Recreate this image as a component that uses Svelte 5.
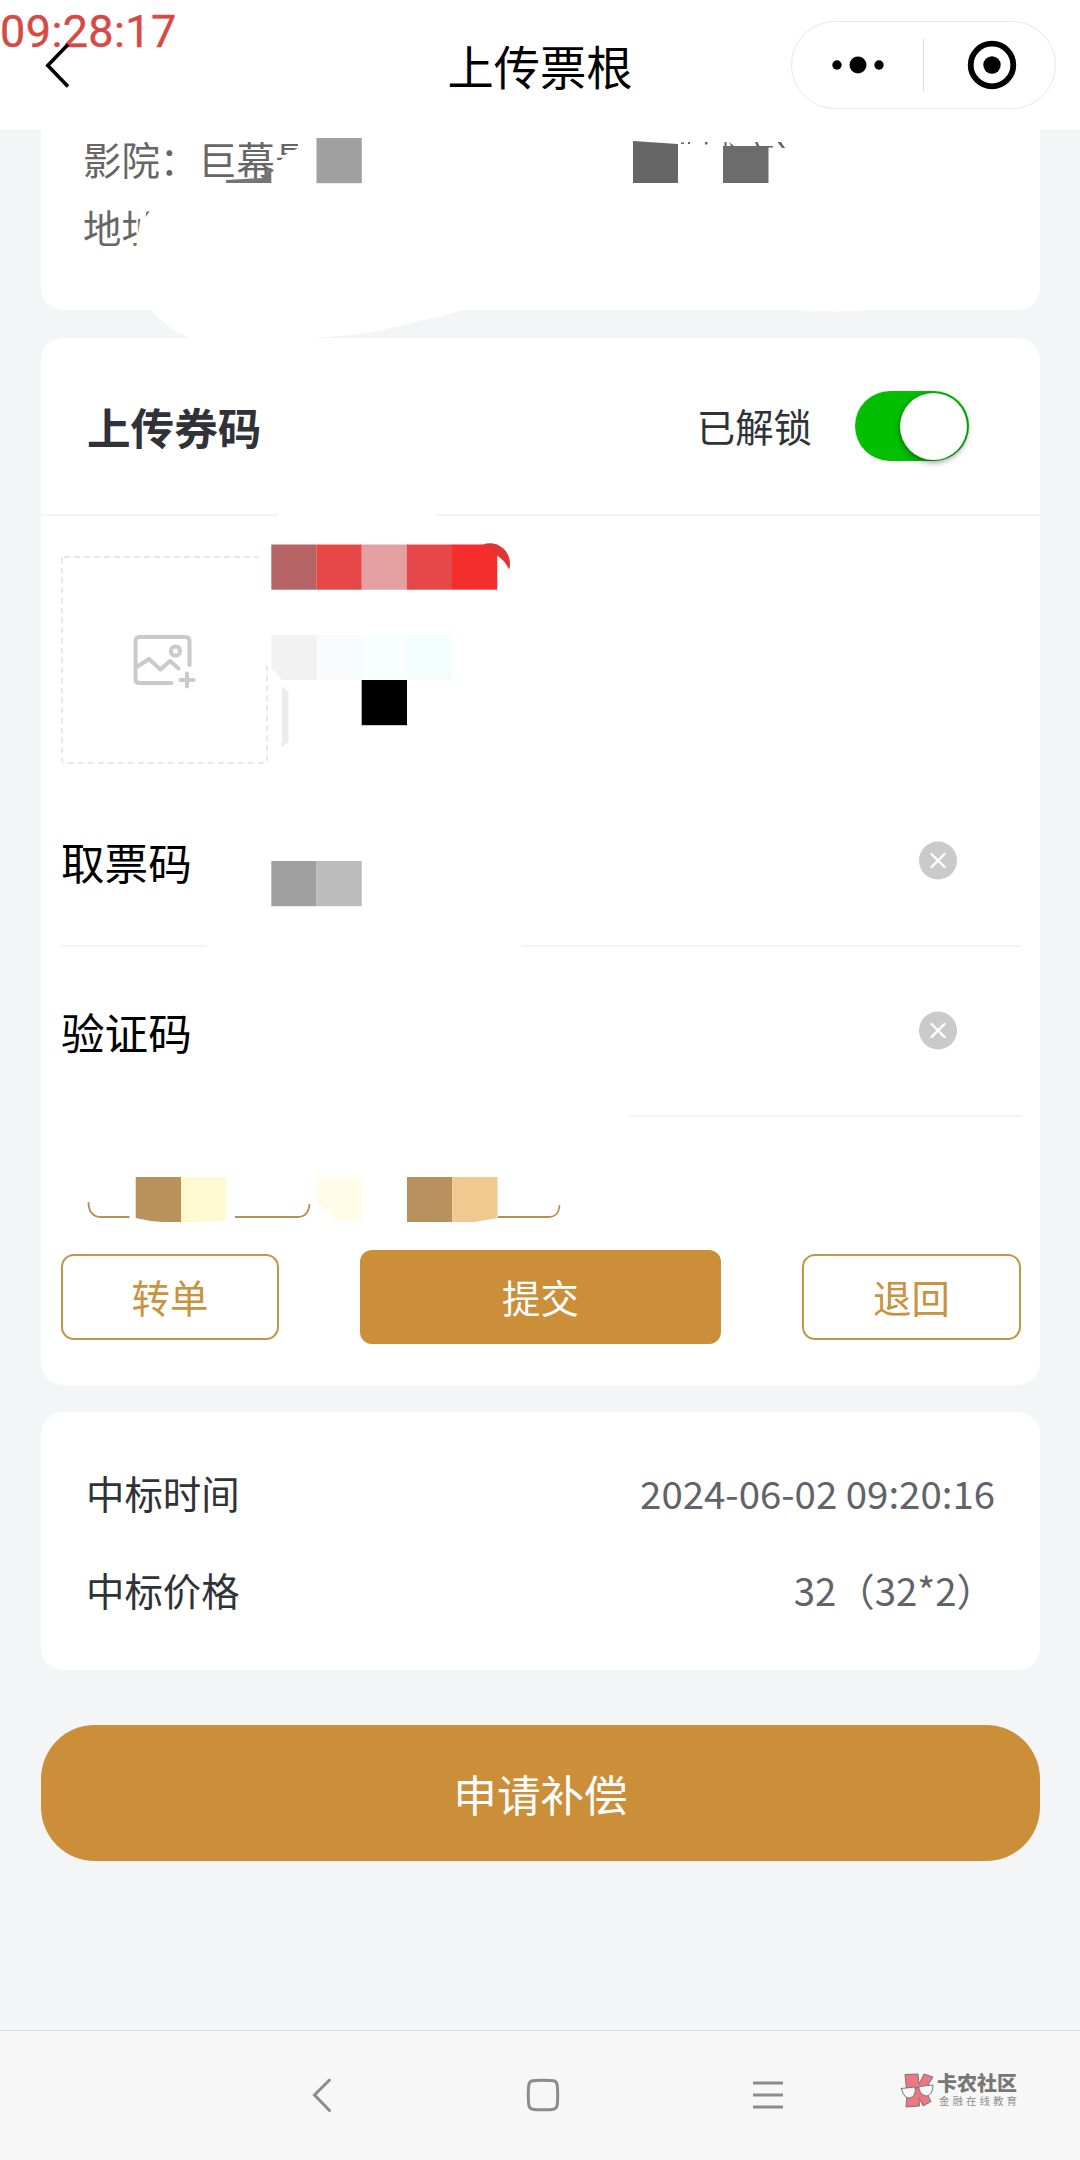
<script>
    let unlocked = true;

    const fields = [
        { label: "取票码", value: "" },
        { label: "验证码", value: "" },
    ];

    const bid = [
        { label: "中标时间", value: "2024-06-02 09:20:16" },
        { label: "中标价格", value: "32（32*2）" },
    ];

    // mosaic tiles left over the private data
    const tiles = [
        { x: 316.5, y: 138, color: "#a0a0a0" },
        { x: 271.3, y: 544.5, color: "#b66365" },
        { x: 316.5, y: 544.5, color: "#e64747" },
        { x: 361.7, y: 544.5, color: "#e4a0a0" },
        { x: 406.9, y: 544.5, color: "#e64748" },
        { x: 452, y: 544.5, color: "#f42d2d" },
        { x: 316.5, y: 635, color: "#f8fcff" },
        { x: 361.7, y: 635, color: "#f8ffff" },
        { x: 406.9, y: 635, color: "#f5feff" },
        { x: 361.7, y: 680, color: "#000" },
        { x: 271.3, y: 861, color: "#a0a0a0" },
        { x: 316.5, y: 861, color: "#bcbcbc" },
    ];
</script>

<div class="page">
    <header>
        <span class="timer">09:28:17</span>
        <svg class="back" width="26" height="48" viewBox="0 0 26 48">
            <path d="M23 3.5 2.8 24.5 23 45.5" />
        </svg>
        <h1>上传票根</h1>
        <div class="capsule">
            <svg width="52" height="20" viewBox="0 0 52 20">
                <circle cx="5" cy="10" r="4.7" />
                <circle cx="26" cy="10" r="8.5" />
                <circle cx="47" cy="10" r="4.7" />
            </svg>
            <i></i>
            <svg width="50" height="50" viewBox="0 0 50 50">
                <circle class="ring" cx="25" cy="25" r="21.3" />
                <circle cx="25" cy="25" r="8.7" />
            </svg>
        </div>
    </header>

    <section class="card cinema">
        <p>影院：巨幕景</p>
        <p>地址</p>
    </section>

    <section class="card upload">
        <div class="head">
            <h2>上传券码</h2>
            <span>已解锁</span>
            <button
                class="switch"
                class:on={unlocked}
                aria-label="已解锁"
                on:click={() => (unlocked = !unlocked)}
            ></button>
        </div>

        <svg class="picker" width="208" height="208" viewBox="0 0 208 208">
            <rect x="1" y="1" width="205" height="206" rx="2" />
            <g>
                <path
                    d="M128.5 109V85q0-4-4-4h-46q-4 0-4 4v38q0 4 4 4h32M75 111.5l13-8.5 11.5 10.5 9.5-8.5 8.5 7.5M126 117.5v13M119.5 124h13"
                />
                <circle cx="114.5" cy="95" r="4.6" />
            </g>
        </svg>

        {#each fields as f}
            <div class="field">
                <span>{f.label}</span>
                <svg width="38" height="39" viewBox="0 0 38 38">
                    <circle cx="19" cy="19" r="19" />
                    <path d="M12.5 12.5l13 13M25.5 12.5l-13 13" />
                </svg>
            </div>
        {/each}

        <div class="actions">
            <button class="outline">转单</button>
            <button class="submit">提交</button>
            <button class="outline">退回</button>
        </div>
    </section>

    <section class="card bid">
        {#each bid as b}
            <div class="row">
                <span>{b.label}</span>
                <span class="value">{b.value}</span>
            </div>
        {/each}
    </section>

    <button class="claim">申请补偿</button>

    <nav>
        <svg class="key" width="48" height="48" viewBox="0 0 48 48">
            <path d="M31.500 9 16.500 24l15 15.500" />
        </svg>
        <svg class="key home" width="48" height="48" viewBox="0 0 48 48">
            <path
                d="M24 9.200q7.500 0 10.500.6 3 .6 3.600 3.700.6 3.500.6 10.500t-.6 10.500q-.6 3.100-3.600 3.700-3 .6-10.500.6t-10.500-.6q-3-.6-3.600-3.700-.6-3.500-.6-10.500t.6-10.500q.6-3.100 3.600-3.700 3-.6 10.500-.6Z"
            />
        </svg>
        <svg class="key menu" width="48" height="48" viewBox="0 0 48 48">
            <path d="M9 12h30M9 24h30M9 36h30" />
        </svg>
        <div class="brand">
            <svg width="34" height="36" viewBox="0 0 34 36">
                <path
                    class="k"
                    d="M5 1.500 18 1l1 10 5-10 9 3-8 13 6 11.500-8 4.500-4-8 .5 8L6 34l1-12Z"
                />
                <path class="lens" d="M1 15.500 15 14q1.500 9-5 11-6 .5-8-8Z" />
                <path class="lens" d="M19 13.500 33 12q0 9-6 11-6 0-8-7.500Z" />
                <path class="bridge" d="M15 15.500q2-2 4 0" />
            </svg>
            <div>
                <b>卡农社区</b>
                <small>金融在线教育</small>
            </div>
        </div>
    </nav>

    <svg class="smudge" width="1080" height="2160" viewBox="0 0 1080 2160">
        <g fill="#fff">
            <path d="M298 136h20v48h-43v-20q3 0 5-3l6-7 12-6z" />
            <path d="M142 208h30v42h-36l1-10z" />
            <path d="M150 309c11 12 22 22 41 29q57 4 114 0c58-2 85-9 113-17q22-3 46-12z" />
            <path d="M790 309.500h85q-38 4-85 0z" />
            <path d="M278 512h158v6H278zM207 943h314v6H207zM60 1113h570v6H60z" />
            <path d="M259 554h12v111h-12z" />
        </g>

        {#each tiles as t}
            <rect x={t.x} y={t.y} width="45.3" height="45.2" fill={t.color} />
        {/each}

        <g fill="#666">
            <path d="M633 141l45 3v39h-45z" />
            <path d="M723 146h45.500v37H723z" fill="#6c6c6c" />
            <path d="M226 180l36-2 6-7 1-3h2.300v15H226z" fill="#757575" />
            <path d="M145.500 217l1-5.500h3zM681 142.500h3v1.500h-3zM688 142h2v2h-2zM705 142h2.500v2.500H705z" />
            <path d="M724.500 142h2v4h-2zM729 142l5 4h-3zM755 142h2.500l2.500 5h-3zM764 146h9v1.500h-9zM777.500 142h3.500l4 6h-3z" />
        </g>

        <path d="M483 544.500c13-5 27 5 27 19q0 4-1 6-4-9-12-14z" fill="#e23436" />
        <path d="M271.300 635h45.200v45H281q-3-7-9.700-11z" fill="#f2f2f2" />
        <path d="M282 686l6.500 6v50l-6.500 5z" fill="#ececec" />

        <path d="M135.700 1177H181v45h-19q-14-1-26.300-4z" fill="#b8915b" />
        <path d="M181 1177h45.300v43q-14 2-27 2H181z" fill="#fff9d2" />
        <path d="M316.500 1177h45.200v45H334q-1-9-9-13-6-3-8.500-8z" fill="#fffde8" />
        <path d="M407 1177h45.200v45H407z" fill="#b8905d" />
        <path d="M452.200 1177h45.300v41q-12 2-23 4h-22.300z" fill="#f0c890" />
        <path
            d="M88.500 1202c0 10 5 15 13 15h28M235 1217h62c8 0 12-4 12.500-13M498 1217h50c8 0 11-4 11.500-12"
            fill="none"
            stroke="#b8914f"
            stroke-width="1.800"
        />
    </svg>
</div>

<style>
    :global(body) {
        background: #f4f5f7;
    }

    .page {
        position: relative;
        display: flex;
        flex-direction: column;
        width: 1080px;
        height: 2160px;
        overflow: hidden;
        background: #f4f5f7;
        color: #303238;
        font-family: "Noto Sans CJK SC", sans-serif;
        font-size: 38.4px;
    }

    h1,
    h2,
    p {
        margin: 0;
        font-weight: 400;
    }

    button {
        padding: 0;
        border: 0;
        font: inherit;
        cursor: pointer;
    }

    header {
        display: flex;
        align-items: center;
        justify-content: center;
        height: 130px;
        background: #fff;
        color: #000;
    }

    h1 {
        padding-bottom: 2px;
        font-size: 46.3px;
    }

    /* floating clock sits over the title bar */
    .timer {
        position: absolute;
        top: 5px;
        left: 0;
        color: #d64a45;
        font: 45px/54px Roboto, sans-serif;
        letter-spacing: 0.4px;
        -webkit-text-stroke: 0.4px #d64a45;
    }

    .back {
        position: absolute;
        top: 41px;
        left: 45px;
        fill: none;
        stroke: #000;
        stroke-width: 3.6;
    }

    .capsule {
        position: absolute;
        top: 21px;
        right: 24px;
        box-sizing: border-box;
        display: flex;
        align-items: center;
        width: 265px;
        height: 88px;
        padding: 0 37px 0 40px;
        border: 1px solid #e8e8e8;
        border-radius: 44px;
    }

    .capsule i {
        flex: none;
        width: 1px;
        height: 52px;
        margin: 0 43px 0 39px;
        background: #dcdcdc;
    }

    .capsule svg {
        flex: none;
    }

    .ring {
        fill: none;
        stroke: #000;
        stroke-width: 5.8;
    }

    .card {
        width: 999px;
        margin: 0 auto 27px 41px;
        border-radius: 22px;
        background: #fff;
    }

    .cinema {
        display: flex;
        flex-direction: column;
        gap: 12px;
        box-sizing: border-box;
        height: 180px;
        margin-bottom: 28px;
        padding-left: 42px;
        border-radius: 0 0 22px 22px;
        color: #666;
    }

    .cinema p {
        height: 56px;
        line-height: 56px;
    }

    .upload {
        box-sizing: border-box;
        height: 1047px;
    }

    .head {
        display: flex;
        align-items: center;
        height: 176px;
        padding: 0 71px 0 46px;
        border-bottom: 2px solid #f4f5f6;
    }

    .head span {
        padding-bottom: 2px;
    }

    h2 {
        flex: 1;
        font-size: 43.6px;
        font-weight: 700;
    }

    .switch {
        width: 114px;
        height: 70px;
        margin-left: 43px;
        padding: 1.5px 2px;
        border-radius: 35px;
        background: #dfdfdf;
    }

    .switch::after {
        content: "";
        display: block;
        width: 67px;
        height: 67px;
        border-radius: 50%;
        background: #fff;
        box-shadow: 0 2px 6px rgba(0, 0, 0, 0.45);
    }

    .switch.on {
        background: #04be02;
    }

    .switch.on::after {
        margin-left: auto;
    }

    .picker {
        display: block;
        margin: 40px 0 12px 20px;
        fill: none;
    }

    .picker rect {
        stroke: #e9e9e9;
        stroke-width: 2;
        stroke-dasharray: 6 4;
    }

    .picker g {
        stroke: #cacaca;
        stroke-width: 4;
        stroke-linecap: round;
        stroke-linejoin: round;
    }

    .field {
        display: flex;
        align-items: center;
        justify-content: space-between;
        height: 168px;
        margin: 0 19px 0 20px;
        padding-right: 64px;
        border-bottom: 2px solid #f3f3f4;
        color: #000;
        font-size: 43.6px;
    }

    .picker + .field {
        height: 169px;
    }

    .field svg {
        margin-bottom: 1px;
    }

    .field circle {
        fill: #cacaca;
    }

    .field path {
        stroke: #fff;
        stroke-width: 2.4;
        stroke-linecap: round;
    }

    .actions {
        display: flex;
        align-items: center;
        justify-content: space-between;
        margin: 133px 19px 0 20px;
    }

    .outline {
        width: 218px;
        height: 86px;
        padding-bottom: 2px;
        border: 2px solid #c1964a;
        border-radius: 13px;
        background: #fff;
        color: #c8923e;
    }

    .submit + .outline {
        width: 219px;
    }

    .submit {
        width: 361px;
        height: 94px;
        padding-bottom: 2px;
        border-radius: 12px;
        background: #cb8e39;
        color: #fff;
    }

    .bid {
        box-sizing: border-box;
        height: 258px;
        margin-bottom: 55px;
        padding: 31px 45px 0 45px;
    }

    .row {
        display: flex;
        align-items: center;
        justify-content: space-between;
        height: 97px;
    }

    .value {
        color: #606369;
    }

    .claim {
        width: 999px;
        height: 136px;
        margin-left: 41px;
        border-radius: 54px;
        background: #cb8e39;
        color: #fff;
        font-size: 43.6px;
    }

    nav {
        display: flex;
        align-items: center;
        box-sizing: border-box;
        height: 130px;
        margin-top: auto;
        padding: 0 0 2px 298px;
        border-top: 1px solid #dcdfe2;
        background: #f7f7f7;
    }

    .key {
        fill: none;
        stroke: #8c8c8c;
        stroke-width: 3;
        stroke-linecap: round;
    }

    .home {
        margin: 0 177px 0 173px;
    }

    .menu {
        stroke-linecap: butt;
    }

    .brand {
        display: flex;
        gap: 3px;
        margin: 0 0 7px 108px;
        color: #777;
    }

    .brand b,
    .brand small {
        display: block;
        white-space: nowrap;
    }

    .brand b {
        font-size: 20px;
        font-weight: 900;
        line-height: 20px;
    }

    .brand small {
        margin-left: 2px;
        color: #8f8f8f;
        font-size: 10.5px;
        letter-spacing: 3px;
        line-height: 15px;
    }

    .k {
        fill: #ee7684;
        stroke: #777;
    }

    .lens {
        fill: #f7f7f7;
        stroke: #777;
    }

    .bridge {
        fill: none;
        stroke: #777;
    }

    .smudge {
        position: absolute;
        top: 0;
        left: 0;
        pointer-events: none;
    }
</style>
